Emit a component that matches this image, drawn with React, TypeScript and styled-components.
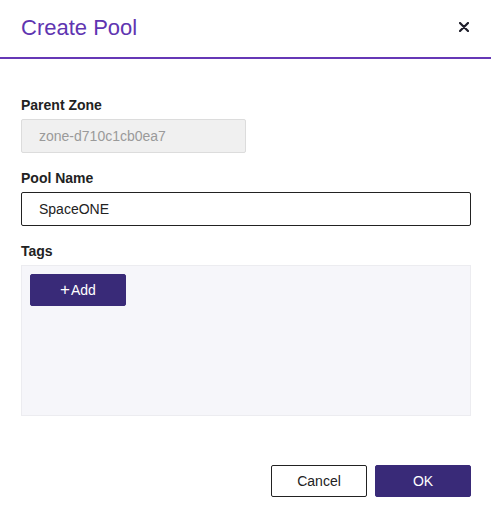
import React from 'react';
import styled, {createGlobalStyle} from 'styled-components';

const GlobalStyle = createGlobalStyle`
  html, body {
    margin: 0;
    padding: 0;
    background: #fff;
  }
  body {
    font-family: 'Liberation Sans', Arial, sans-serif;
    color: #222;
  }
`;

const Modal = styled.div`
  width: 491px;
  display: flex;
  flex-direction: column;
  background: #fff;
`;

const Header = styled.div`
  flex-shrink: 0;
  box-sizing: border-box;
  height: 59px;
  display: flex;
  align-items: center;
  justify-content: space-between;
  padding: 0 22px 0 21px;
  border-bottom: 2px solid #6638b6;
`;

const Title = styled.h2`
  margin: 0;
  font-size: 22px;
  font-weight: 400;
  color: #5f35b1;
  line-height: 1;
  padding-bottom: 1px;
`;

const CloseButton = styled.button`
  border: none;
  background: none;
  padding: 0;
  display: flex;
  cursor: pointer;
  margin-bottom: 3px;
`;

const Body = styled.div`
  display: flex;
  flex-direction: column;
  padding: 38px 20px 0 21px;
`;

const Label = styled.label`
  font-size: 14px;
  font-weight: 700;
  color: #222;
  line-height: 16px;
  margin-bottom: 6px;
`;

const Field = styled.div<{$last?: boolean}>`
  display: flex;
  flex-direction: column;
  margin-bottom: ${p => (p.$last ? 0 : 17)}px;
`;

const Input = styled.input<{$width?: number}>`
  box-sizing: border-box;
  width: ${p => (p.$width ? `${p.$width}px` : '100%')};
  height: 34px;
  padding: 0 17px;
  font-family: 'Liberation Sans', Arial, sans-serif;
  font-size: 14px;
  color: #222;
  background: #fff;
  border: 1px solid #222;
  border-radius: 2px;
  outline: none;

  &:disabled {
    background: #f0f0f0;
    border-color: #dcdcdc;
    color: #9a9a9a;
  }
`;

const TagBox = styled.div`
  box-sizing: border-box;
  height: 151px;
  background: #f6f6fa;
  border: 1px solid #ececf0;
  padding: 8px;
`;

const Button = styled.button<{$variant?: 'primary' | 'outline'}>`
  box-sizing: border-box;
  height: 32px;
  width: 96px;
  font-family: 'Liberation Sans', Arial, sans-serif;
  font-size: 14px;
  border-radius: 2px;
  cursor: pointer;
  display: inline-flex;
  align-items: center;
  justify-content: center;
  gap: 1px;
  border: 1px solid ${p => (p.$variant === 'outline' ? '#222' : '#392a78')};
  background: ${p => (p.$variant === 'outline' ? '#fff' : '#392a78')};
  color: ${p => (p.$variant === 'outline' ? '#222' : '#fff')};
`;

const Plus = styled.span`
  font-size: 17px;
  line-height: 1;
  margin-top: -2px;
`;

const Footer = styled.div`
  display: flex;
  justify-content: flex-end;
  gap: 8px;
  padding: 49px 20px 0 21px;
`;

export default function App() {
  return (
    <>
      <GlobalStyle />
      <Modal>
        <Header>
          <Title>Create Pool</Title>
          <CloseButton aria-label="close">
            <svg width="10" height="10" viewBox="0 0 10 10">
              <path d="M1 1 L9 9 M9 1 L1 9" stroke="#1e1e2a" strokeWidth="2.2" strokeLinecap="round" />
            </svg>
          </CloseButton>
        </Header>
        <Body>
          <Field>
            <Label>Parent Zone</Label>
            <Input $width={225} value="zone-d710c1cb0ea7" disabled readOnly />
          </Field>
          <Field>
            <Label>Pool Name</Label>
            <Input defaultValue="SpaceONE" />
          </Field>
          <Field $last>
            <Label>Tags</Label>
            <TagBox>
              <Button>
                <Plus>+</Plus>Add
              </Button>
            </TagBox>
          </Field>
        </Body>
        <Footer>
          <Button $variant="outline">Cancel</Button>
          <Button>OK</Button>
        </Footer>
      </Modal>
    </>
  );
}
